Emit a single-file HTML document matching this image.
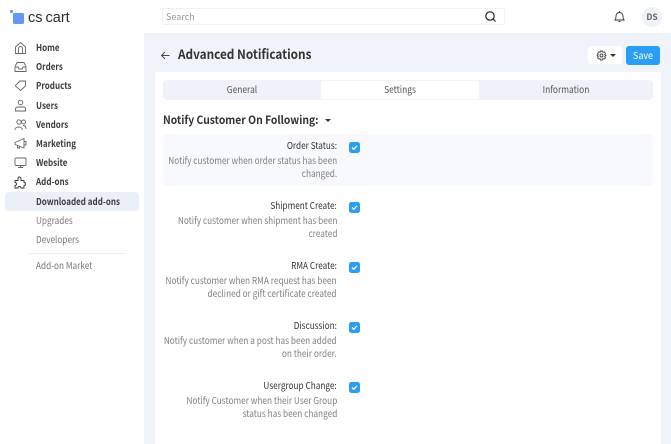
<!DOCTYPE html>
<html><head><meta charset="utf-8"><style>
html,body{margin:0;padding:0}
body{width:671px;height:444px;overflow:hidden;position:relative;background:#f0f3fa;font-family:"Noto Sans CJK JP","Liberation Sans",sans-serif;color:#333}
.a{position:absolute;white-space:nowrap;line-height:12px}
.nav{left:36px;font-size:9.5px;font-weight:700;color:#3c3c3c;transform:scaleX(.845);transform-origin:0 50%}
.sub{left:36px;font-size:9.5px;color:#777;transform:scaleX(.865);transform-origin:0 50%}
svg{position:absolute;fill:none;stroke:#666;stroke-width:.9}
.l{right:334px;font-size:9.5px;color:#333;transform:scaleX(.865);transform-origin:100% 50%}
.d{right:334px;font-size:9.5px;color:#808080;text-align:right;line-height:13px;white-space:nowrap;transform:scaleX(.87);transform-origin:100% 50%}
.t{font-size:9.5px;color:#555;text-align:center;transform:scaleX(.885)}
.c{position:absolute;left:349px;width:11px;height:11px;background:#2a9df4;border-radius:2.5px}
.c svg{left:0;top:0;stroke:#fff;stroke-width:1.3}
</style></head><body>
<div style="position:absolute;left:0;top:0;width:671px;height:33px;background:#fff"></div>
<div style="position:absolute;left:0;top:33px;width:144px;height:411px;background:#fff"></div>
<div style="position:absolute;left:13px;top:13px;width:11px;height:11px;background:linear-gradient(135deg,#5a9cf5,#6f8ff7);border-radius:1.5px"></div>
<div style="position:absolute;left:10px;top:10px;width:3px;height:3px;background:#5b8ff5;border-radius:50%"></div>
<div class="a" style="left:28px;top:10.500px;font:14.5px/15px 'Liberation Sans',sans-serif;color:#2b2b2b;word-spacing:-1px">cs cart</div>

<svg style="left:14px;top:41px" width="13" height="14" viewBox="0 0 13 14"><path d="M1.500 6 6.500 1.500 11.500 6V12.500H1.500ZM4.500 12.500V7.500A2 2 0 0 1 8.500 7.500V12.500"/></svg>
<svg style="left:14px;top:61px" width="13" height="12" viewBox="0 0 13 12"><path d="M1 6 3 1.500H10L12 6V10.500H1ZM1 6H4L5 8H8L9 6H12"/></svg>
<svg style="left:14px;top:79px" width="13" height="13" viewBox="0 0 13 13"><path d="M6 2H11.500V7L6.500 11.500 1.500 7 1.800 6Z"/></svg>
<svg style="left:14px;top:99px" width="13" height="13" viewBox="0 0 13 13"><circle cx="6.500" cy="3.500" r="2.300"/><path d="M1.500 12V10A2 2 0 0 1 3.500 8H9.500A2 2 0 0 1 11.500 10V12Z"/></svg>
<svg style="left:14px;top:118px" width="13" height="13" viewBox="0 0 13 13"><circle cx="5" cy="4" r="2.200"/><circle cx="9.500" cy="4" r="2"/><path d="M1 12C1 8 8 8 8.500 12M9 7.500C11 7.500 12 9 12 11"/></svg>
<svg style="left:14px;top:137px" width="13" height="13" viewBox="0 0 13 13"><path d="M1 5.500 10 1.500V11L1 7.500ZM10 4.500H12V8H10M3.500 8.500V11H5.500V9.500"/></svg>
<svg style="left:14px;top:157px" width="13" height="12" viewBox="0 0 13 12"><rect x="1" y="1" width="11" height="7.500" rx="1"/><path d="M6.500 8.500V10.500M4 10.500H9"/></svg>
<svg style="left:14px;top:176px;stroke:#333" width="13" height="13" viewBox="0 0 13 13"><path d="M1 4.500H4V2.500A1.500 1.500 0 0 1 7 2.500V4.500H10V6.500A1.500 1.500 0 0 1 10 9.500V12H7A1.500 1.500 0 0 0 4 12H1V9.500A1.500 1.500 0 0 0 1 6.500Z"/></svg>

<div class="a nav" style="top:41px">Home</div>
<div class="a nav" style="top:60px">Orders</div>
<div class="a nav" style="top:79px">Products</div>
<div class="a nav" style="top:99px">Users</div>
<div class="a nav" style="top:118px">Vendors</div>
<div class="a nav" style="top:137px">Marketing</div>
<div class="a nav" style="top:156px">Website</div>
<div class="a nav" style="top:175px">Add-ons</div>
<div style="position:absolute;left:5px;top:192px;width:134px;height:19px;background:#ebf0f8;border-radius:4px"></div>
<div class="a nav" style="top:195px">Downloaded add-ons</div>
<div class="a sub" style="top:214px">Upgrades</div>
<div class="a sub" style="top:233px">Developers</div>
<div style="position:absolute;left:27px;top:253px;width:99px;height:1px;background:#eee"></div>
<div class="a sub" style="top:259px">Add-on Market</div>

<div style="position:absolute;left:162px;top:8px;width:343px;height:17px;border:1px solid #f0f0f0;border-radius:2px;box-sizing:border-box"></div>
<div class="a" style="left:166px;top:10.500px;font-size:9px;color:#999">Search</div>
<svg style="left:484px;top:10px;stroke:#222;stroke-width:1.200" width="13" height="13" viewBox="0 0 13 13"><circle cx="6" cy="6" r="4.200"/><path d="M9 9 11.500 11.500"/></svg>
<svg style="left:613px;top:10px;stroke:#333" width="13" height="13" viewBox="0 0 13 13"><path d="M2 10C3 9 3 8 3 6A3.500 3.500 0 0 1 10 6C10 8 10 9 11 10ZM5.500 11.500H7.500M6.500 2V1"/></svg>
<div class="a" style="left:642px;top:7px;width:20px;height:20px;border-radius:50%;background:#eff2f8;color:#666;font-size:8.500px;font-weight:700;line-height:20px;text-align:center">DS</div>

<svg style="left:160px;top:50px;stroke:#444" width="11" height="11" viewBox="0 0 11 11"><path d="M9.500 5.500H1.500M5 2 1.500 5.500 5 9"/></svg>
<div class="a" style="left:178px;top:46px;font-size:13px;line-height:16px;font-weight:700;color:#333;transform:scaleX(.905);transform-origin:0 50%">Advanced Notifications</div>
<div style="position:absolute;left:588px;top:46px;width:34px;height:18px;background:#fff;border-radius:3px"></div>
<svg style="left:596px;top:50px;stroke:#444" width="11" height="11" viewBox="0 0 11 11"><circle cx="5.500" cy="5.500" r="1.500"/><path d="M4.500 1H6.500L7 2.300 8.300 1.900 9.500 3.500 8.700 4.500 10 5.500 8.700 6.500 9.500 7.800 8.200 9 7 8.600 6.500 10H4.500L4 8.600 2.700 9 1.500 7.800 2.300 6.500 1 5.500 2.300 4.500 1.500 3.500 2.700 1.900 4 2.300Z"/></svg>
<div style="position:absolute;left:610px;top:53.500px;width:0;height:0;border:3px solid transparent;border-top-color:#333;border-bottom:0"></div>
<div style="position:absolute;left:626px;top:46px;width:34px;height:19px;background:#2a9df4;border-radius:3px"></div>
<div class="a" style="left:626px;top:47px;width:34px;color:#fff;font-size:9.500px;line-height:16px;text-align:center;transform:scaleX(.95)">Save</div>

<div style="position:absolute;left:155px;top:72px;width:506px;height:372px;background:#fff"></div>
<div style="position:absolute;left:163px;top:80px;width:490px;height:20px;background:#eff2f8;border-radius:4px"></div>
<div style="position:absolute;left:321px;top:81px;width:158px;height:18px;background:#fff;border-radius:3px"></div>
<div class="a t" style="left:163px;top:83px;width:158px">General</div>
<div class="a t" style="left:321px;top:83px;width:158px">Settings</div>
<div class="a t" style="left:479px;top:83px;width:174px">Information</div>

<div class="a" style="left:163px;top:113px;font-size:11px;line-height:14px;font-weight:700;color:#333;transform:scaleX(.94);transform-origin:0 50%">Notify Customer On Following:</div>
<div style="position:absolute;left:325px;top:119px;width:0;height:0;border:3.500px solid transparent;border-top-color:#333;border-bottom:0"></div>

<div style="position:absolute;left:163px;top:134px;width:490px;height:52px;background:#f8f9fc"></div>

<div class="a l" style="top:139px">Order Status:</div>
<div class="a d" style="top:154px">Notify customer when order status has been<br>changed.</div>
<div class="c" style="top:142px"><svg width="11" height="11" viewBox="0 0 11 11"><path d="M3 5.500 4.800 7.300 8 3.800"/></svg></div>

<div class="a l" style="top:199px">Shipment Create:</div>
<div class="a d" style="top:214px">Notify customer when shipment has been<br>created</div>
<div class="c" style="top:202px"><svg width="11" height="11" viewBox="0 0 11 11"><path d="M3 5.500 4.800 7.300 8 3.800"/></svg></div>

<div class="a l" style="top:259px">RMA Create:</div>
<div class="a d" style="top:274px">Notify customer when RMA request has been<br>declined or gift certificate created</div>
<div class="c" style="top:262px"><svg width="11" height="11" viewBox="0 0 11 11"><path d="M3 5.500 4.800 7.300 8 3.800"/></svg></div>

<div class="a l" style="top:319px">Discussion:</div>
<div class="a d" style="top:334px">Notify customer when a post has been added<br>on their order.</div>
<div class="c" style="top:322px"><svg width="11" height="11" viewBox="0 0 11 11"><path d="M3 5.500 4.800 7.300 8 3.800"/></svg></div>

<div class="a l" style="top:379px">Usergroup Change:</div>
<div class="a d" style="top:394px">Notify Customer when their User Group<br>status has been changed</div>
<div class="c" style="top:382px"><svg width="11" height="11" viewBox="0 0 11 11"><path d="M3 5.500 4.800 7.300 8 3.800"/></svg></div>
</body></html>
